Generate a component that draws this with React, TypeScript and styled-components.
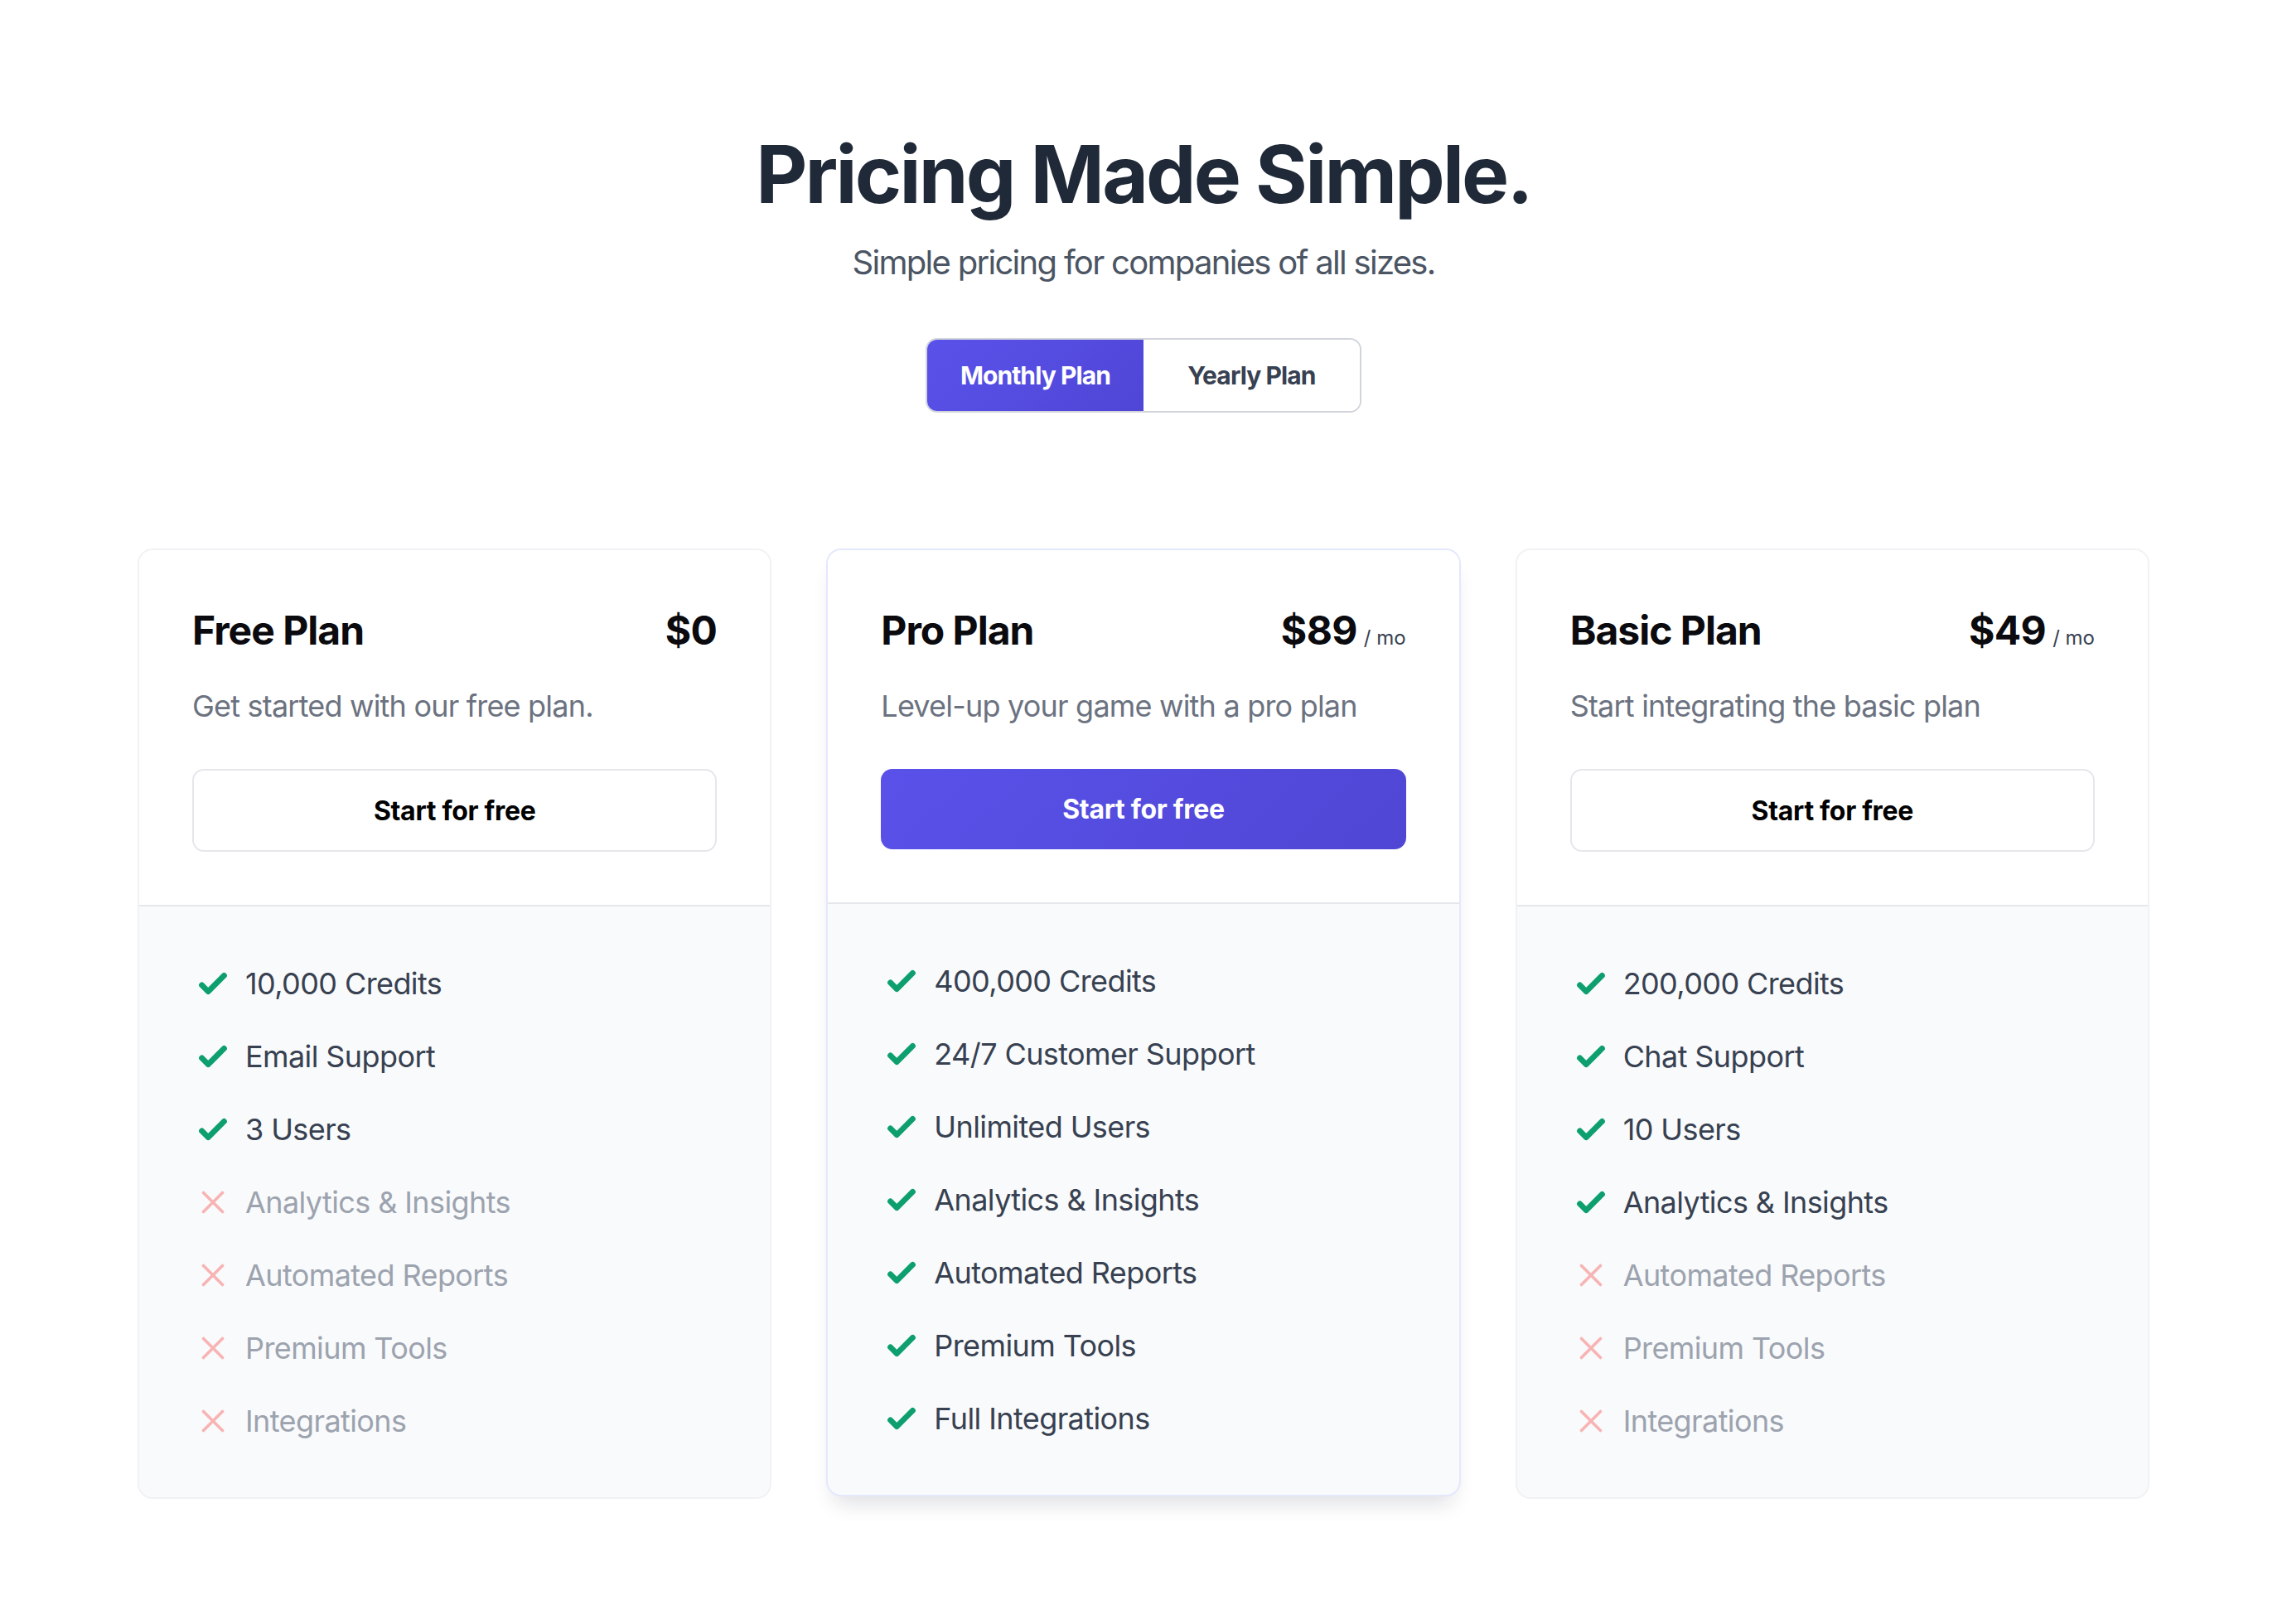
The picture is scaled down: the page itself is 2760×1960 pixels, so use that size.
import React from 'react';
import styled, { createGlobalStyle, css } from 'styled-components';

const GlobalStyle = createGlobalStyle`
  html, body {
    margin: 0;
    padding: 0;
    background: #ffffff;
  }

  body {
    font-family: Inter, "Noto Sans", "Liberation Sans", sans-serif;
    -webkit-font-smoothing: antialiased;
  }

  * {
    box-sizing: border-box;
  }
`;

type Feature = { label: string; included: boolean };

type Plan = {
  name: string;
  price: string;
  period?: string;
  description: string;
  featured?: boolean;
  features: Feature[];
};

const plans: Plan[] = [
  {
    name: 'Free Plan',
    price: '$0',
    description: 'Get started with our free plan.',
    features: [
      { label: '10,000 Credits', included: true },
      { label: 'Email Support', included: true },
      { label: '3 Users', included: true },
      { label: 'Analytics & Insights', included: false },
      { label: 'Automated Reports', included: false },
      { label: 'Premium Tools', included: false },
      { label: 'Integrations', included: false }
    ]
  },
  {
    name: 'Pro Plan',
    price: '$89',
    period: '/ mo',
    description: 'Level-up your game with a pro plan',
    featured: true,
    features: [
      { label: '400,000 Credits', included: true },
      { label: '24/7 Customer Support', included: true },
      { label: 'Unlimited Users', included: true },
      { label: 'Analytics & Insights', included: true },
      { label: 'Automated Reports', included: true },
      { label: 'Premium Tools', included: true },
      { label: 'Full Integrations', included: true }
    ]
  },
  {
    name: 'Basic Plan',
    price: '$49',
    period: '/ mo',
    description: 'Start integrating the basic plan',
    features: [
      { label: '200,000 Credits', included: true },
      { label: 'Chat Support', included: true },
      { label: '10 Users', included: true },
      { label: 'Analytics & Insights', included: true },
      { label: 'Automated Reports', included: false },
      { label: 'Premium Tools', included: false },
      { label: 'Integrations', included: false }
    ]
  }
];

const Page = styled.main`
  min-height: 1960px;
  padding-top: 162px;
  display: flex;
  flex-direction: column;
  align-items: center;
`;

const Title = styled.h1`
  margin: 0;
  font-size: 96px;
  line-height: 96px;
  font-weight: 700;
  letter-spacing: -2.8px;
  color: #1f2937;
`;

const Subtitle = styled.p`
  margin: 31px 0 0;
  font-size: 40px;
  line-height: 56px;
  letter-spacing: -1.7px;
  color: #4b5563;
`;

const Toggle = styled.div`
  margin-top: 63px;
  display: inline-flex;
  border: 2px solid #d1d5db;
  border-radius: 14px;
  overflow: hidden;
`;

const ToggleButton = styled.button<{ $active?: boolean }>`
  width: 261px;
  height: 86px;
  border: 0;
  margin: 0;
  font-family: inherit;
  font-size: 30px;
  font-weight: 700;
  letter-spacing: -0.9px;
  cursor: pointer;
  background: #ffffff;
  color: #374151;

  ${(p) => p.$active && css`
    background: linear-gradient(135deg, #5a51ea 0%, #4f46d6 100%);
    color: #ffffff;
  `}
`;

const Grid = styled.section`
  margin-top: 164px;
  width: 2428px;
  display: grid;
  grid-template-columns: repeat(3, 1fr);
  column-gap: 66px;
  align-items: start;
`;

const Card = styled.article<{ $featured?: boolean }>`
  border: 2px solid ${(p) => (p.$featured ? '#e3e8fd' : '#f1f2f4')};
  border-radius: 18px;
  overflow: hidden;
  background: #f9fafb;
  box-shadow: ${(p) => (p.$featured ? '0 18px 26px -10px rgba(17, 24, 39, 0.14)' : 'none')};
`;

const CardHead = styled.div`
  padding: 65px 64px 64px;
  background: #ffffff;
  border-bottom: 2px solid #e5e7eb;
`;

const HeadRow = styled.div`
  display: flex;
  justify-content: space-between;
  align-items: baseline;
`;

const PlanName = styled.h2`
  margin: 0;
  font-size: 48px;
  line-height: 64px;
  font-weight: 700;
  letter-spacing: -1px;
  color: #0b0b0f;
`;

const Price = styled.div`
  display: flex;
  align-items: baseline;
  gap: 8px;
`;

const Amount = styled.span`
  font-size: 48px;
  line-height: 64px;
  font-weight: 700;
  letter-spacing: -0.6px;
  color: #0b0b0f;
`;

const Period = styled.span`
  font-size: 24px;
  color: #374151;
`;

const Description = styled.p`
  margin: 31px 0 0;
  font-size: 36px;
  line-height: 56px;
  letter-spacing: -0.8px;
  color: #6b7280;
`;

const CtaButton = styled.button<{ $primary?: boolean }>`
  display: block;
  width: 100%;
  margin-top: 48px;
  height: 100px;
  border: 2px solid #e5e7eb;
  border-radius: 14px;
  background: #ffffff;
  font-family: inherit;
  font-size: 32px;
  font-weight: 700;
  letter-spacing: -0.3px;
  color: #000000;
  cursor: pointer;

  ${(p) => p.$primary && css`
    height: 97px;
    border: 0;
    background: linear-gradient(135deg, #5a51ea 0%, #4f46d4 100%);
    color: #ffffff;
  `}
`;

const FeatureList = styled.ul`
  list-style: none;
  margin: 0;
  padding: 65px 64px 64px;
  display: flex;
  flex-direction: column;
  gap: 32px;
`;

const FeatureItem = styled.li<{ $included: boolean }>`
  display: flex;
  align-items: center;
  gap: 16px;
  font-size: 36px;
  line-height: 56px;
  letter-spacing: -0.6px;
  color: ${(p) => (p.$included ? '#374151' : '#9ca3af')};
`;

const IconBox = styled.svg`
  flex: none;
  width: 46px;
  height: 46px;
  margin-left: 2px;
`;

function CheckIcon () {
  return (
    <IconBox viewBox='0 0 24 24' fill='none'>
      <path
        d='M5 13l4 4L19 7'
        stroke='#0e9f6e'
        strokeLinecap='round'
        strokeLinejoin='round'
        strokeWidth={3.6}
      />
    </IconBox>
  );
}

function CrossIcon () {
  return (
    <IconBox viewBox='0 0 24 24' fill='none'>
      <path
        d='M6 18L18 6M6 6l12 12'
        stroke='#f8b4b4'
        strokeLinecap='round'
        strokeLinejoin='round'
        strokeWidth={1.9}
      />
    </IconBox>
  );
}

function PlanCard ({ plan }: { plan: Plan }) {
  return (
    <Card $featured={plan.featured}>
      <CardHead>
        <HeadRow>
          <PlanName>{plan.name}</PlanName>
          <Price>
            <Amount>{plan.price}</Amount>
            {plan.period && <Period>{plan.period}</Period>}
          </Price>
        </HeadRow>
        <Description>{plan.description}</Description>
        <CtaButton $primary={plan.featured}>Start for free</CtaButton>
      </CardHead>
      <FeatureList>
        {plan.features.map((f) => (
          <FeatureItem $included={f.included} key={f.label}>
            {f.included ? <CheckIcon /> : <CrossIcon />}
            {f.label}
          </FeatureItem>
        ))}
      </FeatureList>
    </Card>
  );
}

export default function App () {
  return (
    <>
      <GlobalStyle />
      <Page>
        <Title>Pricing Made Simple.</Title>
        <Subtitle>Simple pricing for companies of all sizes.</Subtitle>
        <Toggle>
          <ToggleButton $active>Monthly Plan</ToggleButton>
          <ToggleButton>Yearly Plan</ToggleButton>
        </Toggle>
        <Grid>
          {plans.map((p) => <PlanCard key={p.name} plan={p} />)}
        </Grid>
      </Page>
    </>
  );
}
